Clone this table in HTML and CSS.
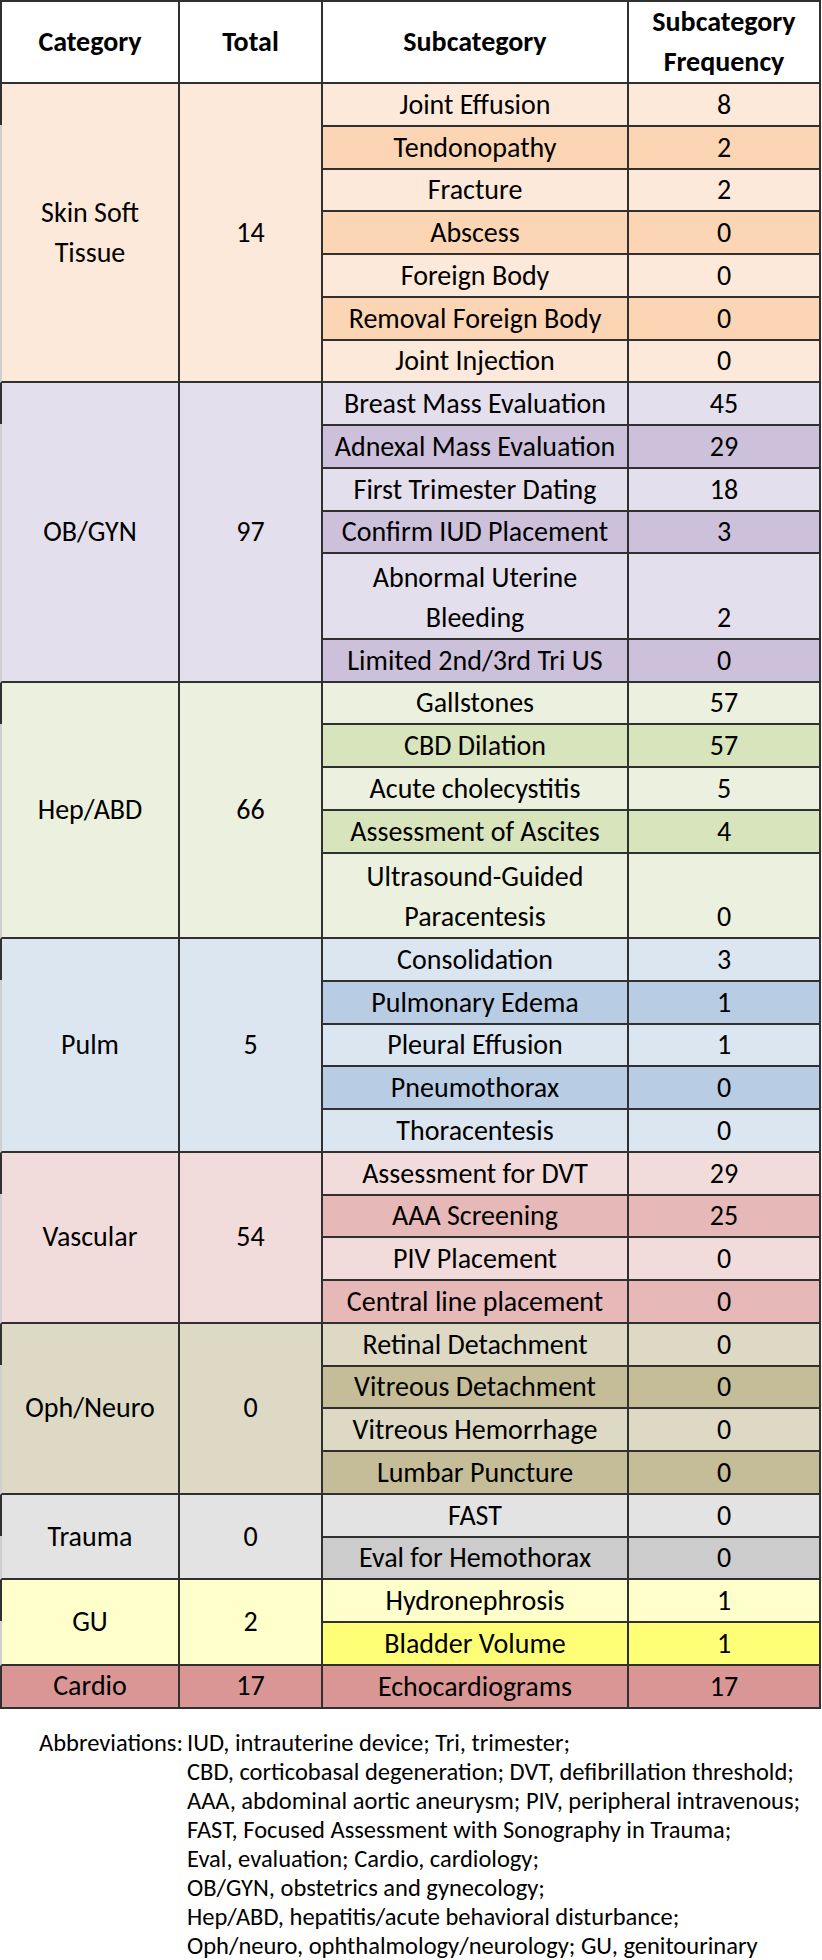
FILE: index.html
```html
<!DOCTYPE html>
<html lang="en">
<head>
<meta charset="utf-8">
<title>Ultrasound Categories</title>
<link rel="stylesheet" href="styles.css">
</head>
<body>
<main class="page">
<table class="grid">
  <colgroup>
    <col class="c1"><col class="c2"><col class="c3"><col class="c4">
  </colgroup>
  <thead>
    <tr class="head">
      <th class="first">Category</th>
      <th>Total</th>
      <th>Subcategory</th>
      <th>Subcategory<br>Frequency</th>
    </tr>
  </thead>
  <tbody class="g skin">
    <tr class="r"><td class="cat" rowspan="7">Skin Soft<br>Tissue</td><td class="tot" rowspan="7">14</td><td class="sub l">Joint Effusion</td><td class="fq l">8</td></tr>
    <tr class="r"><td class="sub d">Tendonopathy</td><td class="fq d">2</td></tr>
    <tr class="r"><td class="sub l">Fracture</td><td class="fq l">2</td></tr>
    <tr class="r"><td class="sub d">Abscess</td><td class="fq d">0</td></tr>
    <tr class="r"><td class="sub l">Foreign Body</td><td class="fq l">0</td></tr>
    <tr class="r"><td class="sub d">Removal Foreign Body</td><td class="fq d">0</td></tr>
    <tr class="r last"><td class="sub l">Joint Injection</td><td class="fq l">0</td></tr>
  </tbody>
  <tbody class="g ob">
    <tr class="r"><td class="cat" rowspan="6">OB/GYN</td><td class="tot" rowspan="6">97</td><td class="sub l">Breast Mass Evaluation</td><td class="fq l">45</td></tr>
    <tr class="r"><td class="sub d">Adnexal Mass Evaluation</td><td class="fq d">29</td></tr>
    <tr class="r"><td class="sub l">First Trimester Dating</td><td class="fq l">18</td></tr>
    <tr class="r"><td class="sub d">Confirm IUD Placement</td><td class="fq d">3</td></tr>
    <tr class="r2"><td class="sub l">Abnormal Uterine<br>Bleeding</td><td class="fq l">2</td></tr>
    <tr class="r last"><td class="sub d">Limited 2nd/3rd Tri US</td><td class="fq d">0</td></tr>
  </tbody>
  <tbody class="g hep">
    <tr class="r"><td class="cat" rowspan="5">Hep/ABD</td><td class="tot" rowspan="5">66</td><td class="sub l">Gallstones</td><td class="fq l">57</td></tr>
    <tr class="r"><td class="sub d">CBD Dilation</td><td class="fq d">57</td></tr>
    <tr class="r"><td class="sub l">Acute cholecystitis</td><td class="fq l">5</td></tr>
    <tr class="r"><td class="sub d">Assessment of Ascites</td><td class="fq d">4</td></tr>
    <tr class="r2 last"><td class="sub l">Ultrasound-Guided<br>Paracentesis</td><td class="fq l">0</td></tr>
  </tbody>
  <tbody class="g pulm">
    <tr class="r"><td class="cat" rowspan="5">Pulm</td><td class="tot" rowspan="5">5</td><td class="sub l">Consolidation</td><td class="fq l">3</td></tr>
    <tr class="r"><td class="sub d">Pulmonary Edema</td><td class="fq d">1</td></tr>
    <tr class="r"><td class="sub l">Pleural Effusion</td><td class="fq l">1</td></tr>
    <tr class="r"><td class="sub d">Pneumothorax</td><td class="fq d">0</td></tr>
    <tr class="r last"><td class="sub l">Thoracentesis</td><td class="fq l">0</td></tr>
  </tbody>
  <tbody class="g vasc">
    <tr class="r"><td class="cat" rowspan="4">Vascular</td><td class="tot" rowspan="4">54</td><td class="sub l">Assessment for DVT</td><td class="fq l">29</td></tr>
    <tr class="r"><td class="sub d">AAA Screening</td><td class="fq d">25</td></tr>
    <tr class="r"><td class="sub l">PIV Placement</td><td class="fq l">0</td></tr>
    <tr class="r last"><td class="sub d">Central line placement</td><td class="fq d">0</td></tr>
  </tbody>
  <tbody class="g oph">
    <tr class="r"><td class="cat" rowspan="4">Oph/Neuro</td><td class="tot" rowspan="4">0</td><td class="sub l">Retinal Detachment</td><td class="fq l">0</td></tr>
    <tr class="r"><td class="sub d">Vitreous Detachment</td><td class="fq d">0</td></tr>
    <tr class="r"><td class="sub l">Vitreous Hemorrhage</td><td class="fq l">0</td></tr>
    <tr class="r last"><td class="sub d">Lumbar Puncture</td><td class="fq d">0</td></tr>
  </tbody>
  <tbody class="g trauma">
    <tr class="r"><td class="cat" rowspan="2">Trauma</td><td class="tot" rowspan="2">0</td><td class="sub l">FAST</td><td class="fq l">0</td></tr>
    <tr class="r last"><td class="sub d">Eval for Hemothorax</td><td class="fq d">0</td></tr>
  </tbody>
  <tbody class="g gu">
    <tr class="r"><td class="cat" rowspan="2">GU</td><td class="tot" rowspan="2">2</td><td class="sub l">Hydronephrosis</td><td class="fq l">1</td></tr>
    <tr class="r last"><td class="sub d">Bladder Volume</td><td class="fq d">1</td></tr>
  </tbody>
  <tbody class="g cardio">
    <tr class="r last"><td class="cat">Cardio</td><td class="tot">17</td><td class="sub l">Echocardiograms</td><td class="fq l">17</td></tr>
  </tbody>
</table>

<section class="notes">
  <div class="label">Abbreviations:</div>
  <div class="lines">
    <div>IUD, intrauterine device; Tri, trimester;</div>
    <div>CBD, corticobasal degeneration; DVT, defibrillation threshold;</div>
    <div>AAA, abdominal aortic aneurysm; PIV, peripheral intravenous;</div>
    <div>FAST, Focused Assessment with Sonography in Trauma;</div>
    <div>Eval, evaluation; Cardio, cardiology;</div>
    <div>OB/GYN, obstetrics and gynecology;</div>
    <div>Hep/ABD, hepatitis/acute behavioral disturbance;</div>
    <div>Oph/neuro, ophthalmology/neurology; GU, genitourinary</div>
  </div>
</section>
</main>
</body>
</html>
```

FILE: styles.css
```css
html, body {
  margin: 0;
  padding: 0;
  background: #ffffff;
}

.page {
  width: 822px;
  font-family: "Carlito", "Liberation Sans Narrow", "Liberation Sans", Arial, sans-serif;
  color: #000;
}

.grid {
  border-collapse: separate;
  border-spacing: 0;
  table-layout: fixed;
  width: 821px;
  font-size: 28px;
}

.c1 { width: 180px; }
.c2 { width: 143px; }
.c3 { width: 306px; }
.c4 { width: 192px; }

.grid th,
.grid td {
  box-sizing: border-box;
  padding: 0;
  text-align: center;
  white-space: nowrap;
  border-right: 2px solid #303030;
  border-bottom: 2px solid #303030;
}

.head { height: 82px; }
.head th {
  border-top: 2px solid #303030;
  background: #ffffff;
  font-weight: bold;
  line-height: 40px;
  vertical-align: middle;
}
.head th.first { border-left: 2px solid #303030; }

.r  { height: 42.75px; }
.r2 { height: 85.5px; }

.sub, .fq {
  line-height: 40px;
  vertical-align: bottom;
}

.cat, .tot {
  line-height: 40px;
  vertical-align: middle;
}

/* merged cells: dark edge only along the first row, faint line below */
.cat {
  border-left: 2px solid transparent;
  border-right: 2px solid transparent;
  background-origin: border-box;
  background-clip: border-box;
  background-repeat: no-repeat;
  background-image:
    linear-gradient(#303030, #303030),
    linear-gradient(#303030, #303030),
    linear-gradient(#cfcfcf, #cfcfcf),
    linear-gradient(#b9b9b9, #b9b9b9);
  background-size: 2px 41px, 2px 41px, 2px 100%, 1px 100%;
  background-position: left top, right top, left top, right top;
}
.cardio .cat {
  background-size: 2px 100%, 2px 100%, 2px 100%, 1px 100%;
}

/* palettes */
.skin .cat, .skin .tot, .skin .l { background-color: #fde9d9; }
.skin .d { background-color: #fcd5b4; }

.ob .cat, .ob .tot, .ob .l { background-color: #e4dfec; }
.ob .d { background-color: #ccc0da; }

.hep .cat, .hep .tot, .hep .l { background-color: #ebf1de; }
.hep .d { background-color: #d8e4bc; }

.pulm .cat, .pulm .tot, .pulm .l { background-color: #dce6f1; }
.pulm .d { background-color: #b8cce4; }

.vasc .cat, .vasc .tot, .vasc .l { background-color: #f2dcdb; }
.vasc .d { background-color: #e6b8b7; }

.oph .cat, .oph .tot, .oph .l { background-color: #ddd9c4; }
.oph .d { background-color: #c4bd97; }

.trauma .cat, .trauma .tot, .trauma .l { background-color: #e3e3e3; }
.trauma .d { background-color: #cccccc; }

.gu .cat, .gu .tot, .gu .l { background-color: #ffffcc; }
.gu .d { background-color: #ffff77; }

.cardio .cat, .cardio .tot, .cardio .l { background-color: #da9694; }

/* notes */
.notes {
  display: flex;
  padding: 20px 0 0 39px;
  font-size: 24.5px;
  line-height: 29px;
}
.notes .label {
  flex: 0 0 148px;
  white-space: nowrap;
}
.notes .lines div {
  white-space: nowrap;
}
```
